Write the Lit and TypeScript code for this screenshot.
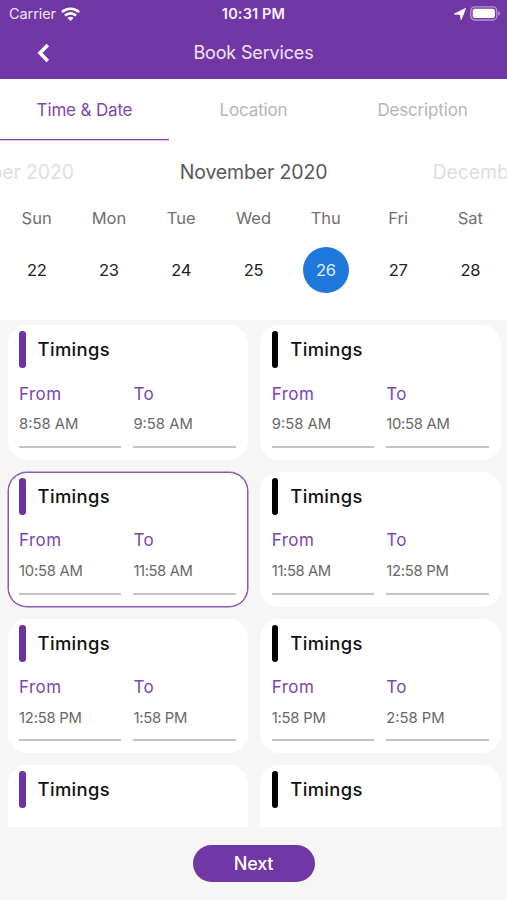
import { LitElement, html, css } from "lit";
import { customElement, property } from "lit/decorators.js";
import { classMap } from "lit/directives/class-map.js";

@customElement("status-bar")
class StatusBar extends LitElement {
  static styles = css`
    :host { display: grid; grid-template-columns: 1fr auto 1fr; align-items: center; height: 27px; color: #fff; }
    .left { display: flex; align-items: center; gap: 5.5px; padding-left: 9px; font-size: 14.5px; letter-spacing: -0.08px; color: #eee2f8; }
    .time { font-size: 14.5px; font-weight: 600; letter-spacing: 0.15px; color: #f8f0ff; }
    .right { display: flex; align-items: center; justify-content: flex-end; gap: 4.5px; padding-right: 6px; }
    svg { display: block; }
  `;
  render() {
    return html`
      <div class="left">
        <span>Carrier</span>
        <svg width="19" height="14" viewBox="0 0 19 14" fill="none" stroke="#fff" stroke-width="2.7">
          <path d="M1 5.1C5.6.6 13.4.6 18 5.1" />
          <path d="M4 8.6C7 5.6 12 5.6 15 8.6" />
          <path d="M9.5 14 6.5 11C8.2 9.4 10.8 9.4 12.5 11Z" fill="#fff" stroke="none" />
        </svg>
      </div>
      <div class="time">10:31 PM</div>
      <div class="right">
        <svg width="12" height="12" viewBox="0 0 12 12"><path d="M11.6.4 7.1 11.5 6.3 6.4.4 6Z" fill="#fff" stroke="#fff" stroke-width=".9" stroke-linejoin="round" /></svg>
        <svg width="31" height="15" viewBox="0 0 31 15">
          <rect x=".8" y=".8" width="26" height="13.2" rx="4" fill="none" stroke="#b596d3" stroke-width="1.3" />
          <rect x="2.7" y="2.7" width="22.2" height="9.4" rx="2" fill="#fff" />
          <path d="M28.2 5.2C30.8 6 30.8 8.8 28.2 9.6Z" fill="#b596d3" />
        </svg>
      </div>
    `;
  }
}

@customElement("timing-card")
class TimingCard extends LitElement {
  @property() from = "";
  @property() to = "";
  @property({ type: Boolean }) dark = false;
  @property({ type: Boolean }) selected = false;

  static styles = css`
    :host { display: block; }
    .card { box-sizing: border-box; height: 134.5px; border: 1px solid #fff; border-radius: 19px; background: #fff; padding: 5px 11px 0 10.6px; }
    .selected { border-color: #8a5ab4; box-shadow: 0 0 0 0.5px #8a5ab4; }
    .head { display: flex; gap: 12px; height: 37px; }
    .bar { width: 6.5px; height: 37px; border-radius: 3.3px; background: #6c34a3; }
    .dark { background: #000; }
    .title { font-size: 18.4px; font-weight: 500; line-height: 22px; padding-top: 6.8px; letter-spacing: 0.35px; color: #111; }
    .fields { display: grid; grid-template-columns: 1fr 1fr; gap: 12px; padding-top: 14.4px; }
    .field { border-bottom: 2px solid #c4c4c4; height: 65.2px; box-sizing: border-box; }
    .label { font-size: 17px; line-height: 22px; color: #7b47ad; letter-spacing: 0.4px; }
    .value { font-size: 14.8px; line-height: 20px; padding-top: 9.7px; color: #686868; white-space: nowrap; }
    .one { letter-spacing: -0.25px; }
    .ones { letter-spacing: -0.4px; }
  `;
  private time(value: string) {
    const classes = { value: true, one: /^1[^1]/.test(value), ones: value.startsWith("11") };
    return html`<div class=${classMap(classes)}>${value}</div>`;
  }
  render() {
    return html`
      <div class=${classMap({ card: true, selected: this.selected })}>
        <div class="head">
          <div class=${classMap({ bar: true, dark: this.dark })}></div>
          <div class="title">Timings</div>
        </div>
        <div class="fields">
          <div class="field"><div class="label">From</div>${this.time(this.from)}</div>
          <div class="field"><div class="label">To</div>${this.time(this.to)}</div>
        </div>
      </div>
    `;
  }
}

const DAYS = [["Sun", 22], ["Mon", 23], ["Tue", 24], ["Wed", 25], ["Thu", 26], ["Fri", 27], ["Sat", 28]];
const SLOTS = [
  ["8:58 AM", "9:58 AM"], ["9:58 AM", "10:58 AM"],
  ["10:58 AM", "11:58 AM"], ["11:58 AM", "12:58 PM"],
  ["12:58 PM", "1:58 PM"], ["1:58 PM", "2:58 PM"],
  ["2:58 PM", "3:58 PM"], ["3:58 PM", "4:58 PM"],
];

@customElement("app-root")
class AppRoot extends LitElement {
  static styles = css`
    :host { display: flex; flex-direction: column; width: 100%; height: 900px; overflow: hidden; background: #f6f6f6; font-family: Inter, "Liberation Sans", sans-serif; }
    .top { background: #7138a5; height: 79px; flex: none; }
    .nav { display: grid; grid-template-columns: 1fr auto 1fr; align-items: center; height: 51px; color: #f0e5f8; font-size: 18px; letter-spacing: -0.16px; }
    .back { display: block; margin-left: 37px; }
    .panel { background: #fff; height: 241px; flex: none; }
    .tabs { display: grid; grid-template-columns: repeat(3, 1fr); height: 61px; }
    .tab { display: flex; justify-content: center; box-sizing: border-box; padding-top: 20px; line-height: 22px; font-size: 17px; letter-spacing: -0.16px; color: #b5b5b5; border-bottom: 1px solid transparent; }
    .active { color: #7c48ae; border-bottom-color: #7c48ae; box-shadow: 0 1px 0 #d9c9e8; }
    .months { display: flex; justify-content: center; height: 64px; align-items: center; font-size: 19.5px; letter-spacing: -0.15px; color: #dedede; white-space: nowrap; overflow: hidden; }
    .month { flex: none; box-sizing: border-box; width: 253px; text-align: center; }
    .previous { padding-left: 20px; }
    .current { color: #585858; }
    .week { display: grid; grid-template-columns: repeat(7, 1fr); padding: 1px 0.5px 0; }
    .day { display: flex; flex-direction: column; align-items: center; font-size: 16.5px; color: #707070; line-height: 26px; }
    .date { display: flex; align-items: center; justify-content: center; width: 46.5px; height: 46.5px; margin-top: 15.5px; border-radius: 50%; color: #222; letter-spacing: -0.3px; }
    .picked { background: #1f78dc; color: #e0f0ff; }
    .list { flex: none; box-sizing: border-box; height: 506.5px; overflow: hidden; padding: 5.4px 6.5px 0 7.5px; display: grid; grid-template-columns: 1fr 1fr; column-gap: 12.5px; row-gap: 12.2px; align-content: start; }
    .footer { display: flex; justify-content: center; padding-top: 18.5px; }
    .next { width: 122px; height: 37px; border: 0; border-radius: 19px; background: #7138a5; color: #fff; font: 500 18px/37px Inter, "Liberation Sans", sans-serif; letter-spacing: -0.2px; padding: 0; }
  `;
  render() {
    return html`
      <div class="top">
        <status-bar></status-bar>
        <div class="nav">
          <svg class="back" width="13" height="20" viewBox="0 0 13 20"><path d="M10.8 2 3 10 10.8 18" fill="none" stroke="#fff" stroke-width="3.5" /></svg>
          <span>Book Services</span>
        </div>
      </div>
      <div class="panel">
        <div class="tabs">
          <div class="tab active">Time &amp; Date</div>
          <div class="tab">Location</div>
          <div class="tab">Description</div>
        </div>
        <div class="months">
          <span class="month previous">October 2020</span>
          <span class="month current">November 2020</span>
          <span class="month">December 2020</span>
        </div>
        <div class="week">
          ${DAYS.map(([name, n]) => html`
            <div class="day"><span>${name}</span><span class=${classMap({ date: true, picked: n === 26 })}>${n}</span></div>`)}
        </div>
      </div>
      <div class="list">
        ${SLOTS.map(([a, b], i) => html`<timing-card .from=${a} .to=${b} .dark=${i % 2 === 1} .selected=${i === 2}></timing-card>`)}
      </div>
      <div class="footer"><button class="next">Next</button></div>
    `;
  }
}
